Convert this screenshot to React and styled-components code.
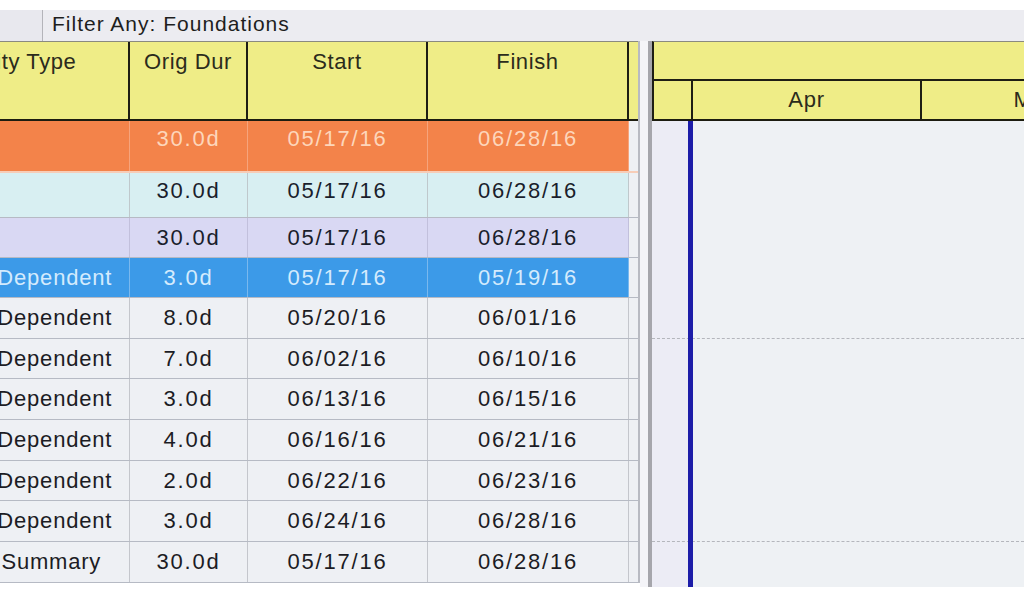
import React from "react";
import styled, { createGlobalStyle } from "styled-components";

const Global = createGlobalStyle`
  html, body { margin: 0; padding: 0; background: #ffffff; }
  body { width: 1024px; height: 600px; overflow: hidden; font-family: "Liberation Sans", Arial, sans-serif; }
`;

const Page = styled.div`
  width: 1024px;
  height: 600px;
  background: #ffffff;
  display: flex;
  flex-direction: column;
  overflow: hidden;
`;

const TopGap = styled.div`
  height: 10px;
  background: #ffffff;
`;

const FilterBar = styled.div`
  height: 31px;
  background: #ececf1;
  display: flex;
  align-items: stretch;
`;

const TabStub = styled.div`
  width: 42px;
  border-right: 1px solid #b4b4ba;
  background: #e8e8ee;
`;

const FilterLabel = styled.div`
  display: flex;
  align-items: center;
  padding-left: 9px;
  font-size: 21px;
  letter-spacing: 1px;
  color: #1e1e1e;
  padding-bottom: 4px;
`;

const Main = styled.div`
  display: flex;
  align-items: flex-start;
  flex: 1;
`;

const TableViewport = styled.div`
  width: 638px;
  overflow: hidden;
  border-right: 2px solid #b8bac2;
  flex: none;
`;

const COLS = "236px 118px 180px 201px 9px";

const Table = styled.div`
  margin-left: -106px;
  width: 744px;
  display: flex;
  flex-direction: column;
`;

const HeaderRow = styled.div`
  display: grid;
  grid-template-columns: ${COLS};
  height: 77px;
  border-top: 1px solid #8a8a80;
  border-bottom: 2px solid #1c1c10;
  background: #efed87;
`;

const HeadCell = styled.div`
  border-right: ${(p) => (p.$last ? "none" : "2px solid #1e1e14")};
  font-size: 22px;
  letter-spacing: 0.6px;
  color: #2b2b1c;
  text-align: center;
  padding-top: 7px;
  white-space: nowrap;
  overflow: hidden;
`;

const Row = styled.div`
  display: grid;
  grid-template-columns: ${COLS};
  height: ${(p) => p.$h}px;
  box-sizing: border-box;
  border-bottom: ${(p) => p.$bottom};
`;

const Cell = styled.div`
  background: ${(p) => p.$bg};
  color: ${(p) => p.$fg};
  border-right: 1px solid ${(p) => p.$line};
  font-size: 22px;
  letter-spacing: ${(p) => (p.$left ? "0.8px" : "1.8px")};
  display: flex;
  align-items: center;
  justify-content: ${(p) => (p.$left ? "flex-start" : "center")};
  padding-left: ${(p) => (p.$left ? "48px" : "0")};
  padding-bottom: ${(p) => p.$pb}px;
  white-space: nowrap;
  overflow: hidden;
  box-sizing: border-box;
`;

const Spacer = styled.div`
  background: #eef0f4;
`;

const Splitter = styled.div`
  width: 12px;
  height: 546px;
  background: #f4f4f8;
  border-right: 4px solid #a6a6ac;
  box-sizing: border-box;
  flex: none;
`;

const Gantt = styled.div`
  flex: 1;
  display: flex;
  flex-direction: column;
  min-width: 0;
`;

const GanttHeader = styled.div`
  height: 77px;
  border-top: 1px solid #8a8a80;
  border-left: 2px solid #1e1e14;
  border-bottom: 2px solid #1c1c10;
  background: #efed87;
  display: flex;
  flex-direction: column;
`;

const GanttTopBand = styled.div`
  height: 37px;
  border-bottom: 2px solid #1e1e14;
`;

const ScaleRow = styled.div`
  flex: 1;
  display: flex;
`;

const ScaleCell = styled.div`
  flex: none;
  width: ${(p) => p.$w}px;
  border-right: 2px solid #1e1e14;
  font-size: 22px;
  letter-spacing: 0.8px;
  color: #2b2b1c;
  display: flex;
  align-items: center;
  justify-content: center;
  white-space: nowrap;
`;

const GanttBody = styled.div`
  position: relative;
  display: flex;
  flex-direction: column;
  padding-bottom: 4px;
  background: linear-gradient(to right, #ececf5 0 36px, #eef1f4 36px);
`;

const Stripe = styled.div`
  height: ${(p) => p.$h}px;
  box-sizing: border-box;
  border-bottom: ${(p) => (p.$dashed ? "1px dashed #b4b6bc" : "none")};
`;

const DataDate = styled.div`
  position: absolute;
  left: 36px;
  top: 0;
  bottom: 0;
  width: 5px;
  background: #1c1ca8;
`;

const rows = [
  { h: 52, bg: "#f3834a", fg: "#fdd6bb", line: "#f6a47c", bottom: "2px solid #f7cdb8", pb: 14, type: "", dur: "30.0d", start: "05/17/16", finish: "06/28/16" },
  { h: 45, bg: "#d8eff2", fg: "#1a1e2c", line: "#bfc8cc", bottom: "1px solid #b6bac4", pb: 8, type: "", dur: "30.0d", start: "05/17/16", finish: "06/28/16" },
  { h: 40, bg: "#d9d8f3", fg: "#1a1e2c", line: "#c2c0dc", bottom: "1px solid #b6bac4", pb: 0, type: "", dur: "30.0d", start: "05/17/16", finish: "06/28/16" },
  { h: 40, bg: "#3c9ae8", fg: "#d4ebfd", line: "#7ab8ee", bottom: "1px solid #b6bac4", pb: 0, type: "Task Dependent", dur: "3.0d", start: "05/17/16", finish: "05/19/16" },
  { h: 41, type: "Task Dependent", dur: "8.0d", start: "05/20/16", finish: "06/01/16" },
  { h: 40, type: "Task Dependent", dur: "7.0d", start: "06/02/16", finish: "06/10/16" },
  { h: 41, type: "Task Dependent", dur: "3.0d", start: "06/13/16", finish: "06/15/16" },
  { h: 41, type: "Task Dependent", dur: "4.0d", start: "06/16/16", finish: "06/21/16" },
  { h: 40, type: "Task Dependent", dur: "2.0d", start: "06/22/16", finish: "06/23/16" },
  { h: 41, type: "Task Dependent", dur: "3.0d", start: "06/24/16", finish: "06/28/16" },
  { h: 41, type: "WBS Summary", dur: "30.0d", start: "05/17/16", finish: "06/28/16" },
];

const defaults = { bg: "#eef0f4", fg: "#1c1c24", line: "#c4c6cc", bottom: "1px solid #b6bac4", pb: 0 };

export default function App() {
  return (
    <Page>
      <Global />
      <TopGap />
      <FilterBar>
        <TabStub />
        <FilterLabel>Filter Any: Foundations</FilterLabel>
      </FilterBar>
      <Main>
        <TableViewport>
          <Table>
            <HeaderRow>
              <HeadCell>Activity Type</HeadCell>
              <HeadCell>Orig Dur</HeadCell>
              <HeadCell>Start</HeadCell>
              <HeadCell>Finish</HeadCell>
              <HeadCell $last />
            </HeaderRow>
            {rows.map((r, i) => {
              const s = { ...defaults, ...r };
              return (
                <Row key={i} $h={s.h} $bottom={s.bottom}>
                  <Cell $left $bg={s.bg} $fg={s.fg} $line={s.line} $pb={s.pb}>{s.type}</Cell>
                  <Cell $bg={s.bg} $fg={s.fg} $line={s.line} $pb={s.pb}>{s.dur}</Cell>
                  <Cell $bg={s.bg} $fg={s.fg} $line={s.line} $pb={s.pb}>{s.start}</Cell>
                  <Cell $bg={s.bg} $fg={s.fg} $line={s.line} $pb={s.pb}>{s.finish}</Cell>
                  <Spacer />
                </Row>
              );
            })}
          </Table>
        </TableViewport>
        <Splitter />
        <Gantt>
          <GanttHeader>
            <GanttTopBand />
            <ScaleRow>
              <ScaleCell $w={37} />
              <ScaleCell $w={227}>Apr</ScaleCell>
              <ScaleCell $w={227}>May</ScaleCell>
            </ScaleRow>
          </GanttHeader>
          <GanttBody>
            {rows.map((r, i) => (
              <Stripe key={i} $h={r.h} $dashed={i === 4 || i === 9} />
            ))}
            <DataDate />
          </GanttBody>
        </Gantt>
      </Main>
    </Page>
  );
}
